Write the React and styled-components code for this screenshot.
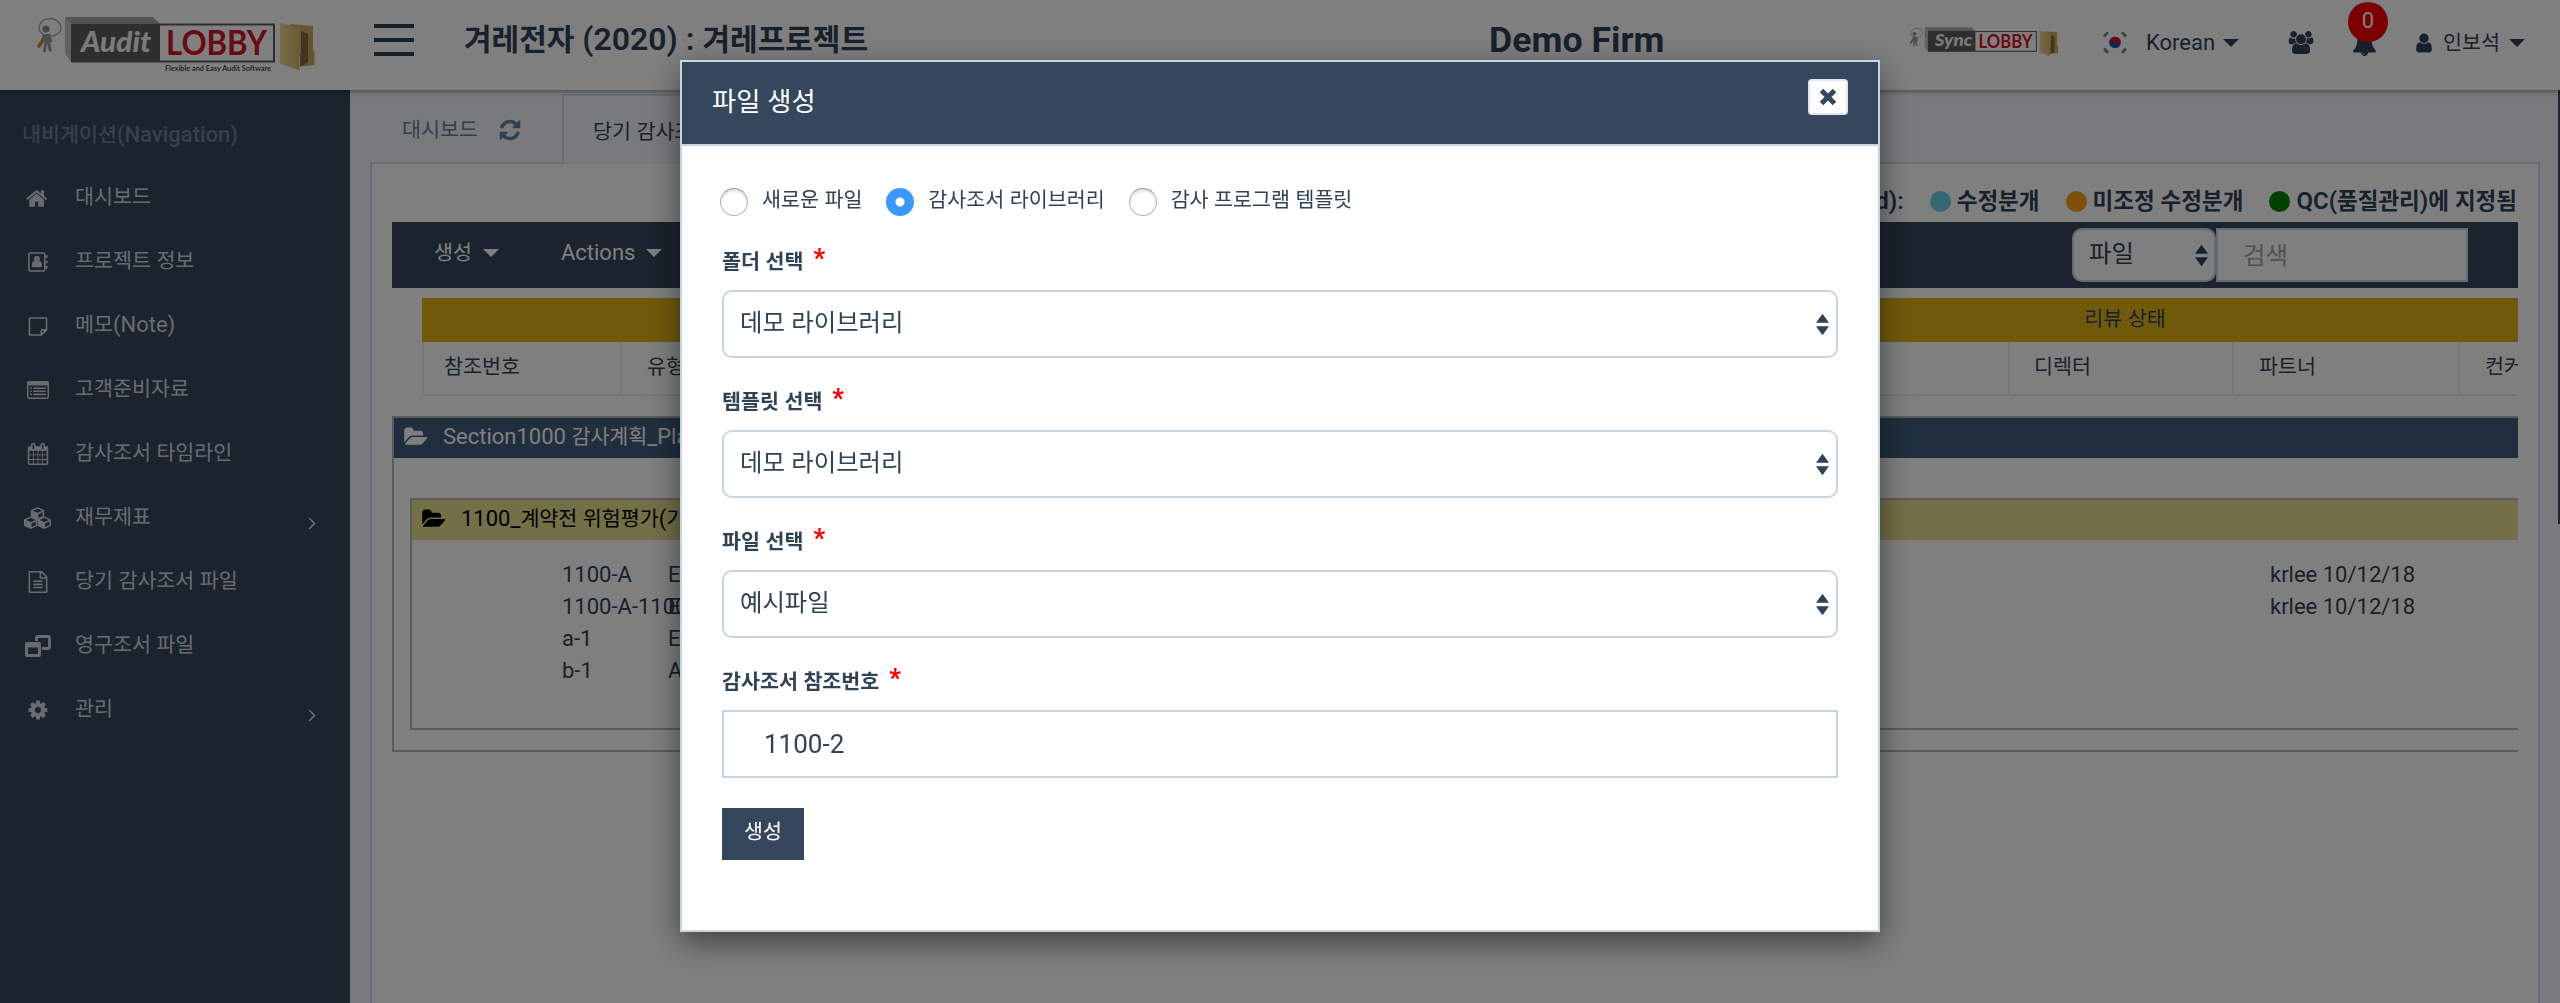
import React from "react";
import styled, { createGlobalStyle, css } from "styled-components";

const c = {
  navy: "#34475c",
  ink: "#2f4256",
  line: "#c8d6e4",
  body: "#f3f5f9",
};

const Global = createGlobalStyle`
  *, *::before, *::after { box-sizing: border-box; }
  html, body { margin: 0; height: 1003px; overflow: hidden; }
  body {
    font-family: Roboto, "Noto Sans CJK KR", sans-serif;
    font-size: 22px;
    line-height: 32px;
    color: ${c.ink};
    background: ${c.body};
  }
`;

const Line = styled.span`white-space: nowrap;`;
const Hangul = styled.span`font-size: 0.938em; line-height: 0;`;

/* Sets Hangul runs slightly smaller than the Latin text around them. */
function T({ children }) {
  const parts = String(children).split(/([\uac00-\ud7a3]+)/);
  return (
    <Line>
      {parts.map((p, i) => (i % 2 ? <Hangul key={i}>{p}</Hangul> : p))}
    </Line>
  );
}

/* ---------- icons ---------- */
const Svg = styled.svg`
  display: block;
  flex: none;
  fill: currentColor;
  overflow: visible;
`;

const paths = {
  home: "M1408 992v480q0 26-19 45t-45 19h-384v-384h-256v384h-384q-26 0-45-19t-19-45v-480q0-1 .5-3t.5-3l575-474 575 474q1 2 1 6zm223-69l-62 74q-8 9-21 11h-3q-13 0-21-7l-692-577-692 577q-12 8-24 7-13-2-21-11l-62-74q-8-10-7-23.5t11-21.5l719-599q32-26 76-26t76 26l244 204v-195q0-14 9-23t23-9h192q14 0 23 9t9 23v408l219 182q10 8 11 21.5t-7 23.5z",
  file: "M1596 380q28 28 48 76t20 88v1152q0 40-28 68t-68 28h-1344q-40 0-68-28t-28-68v-1600q0-40 28-68t68-28h896q40 0 88 20t76 48zm-444-244v376h376q-10-29-22-41l-313-313q-12-12-41-22zm384 1528v-1024h-416q-40 0-68-28t-28-68v-416h-768v1536h1280zm-1024-864q0-14 9-23t23-9h704q14 0 23 9t9 23v64q0 14-9 23t-23 9h-704q-14 0-23-9t-9-23v-64zm736 224q14 0 23 9t9 23v64q0 14-9 23t-23 9h-704q-14 0-23-9t-9-23v-64q0-14 9-23t23-9h704zm0 256q14 0 23 9t9 23v64q0 14-9 23t-23 9h-704q-14 0-23-9t-9-23v-64q0-14 9-23t23-9h704z",
  calendar: "M192 1664h288v-288h-288v288zm352 0h320v-288h-320v288zm-352-352h288v-320h-288v320zm352 0h320v-320h-320v320zm-352-384h288v-288h-288v288zm736 736h320v-288h-320v288zm-384-736h320v-288h-320v288zm768 736h288v-288h-288v288zm-384-352h320v-320h-320v320zm-352-864v-288q0-13-9.5-22.5t-22.5-9.5h-64q-13 0-22.5 9.5t-9.5 22.5v288q0 13 9.5 22.5t22.5 9.5h64q13 0 22.5-9.5t9.5-22.5zm736 864h288v-320h-288v320zm-384-384h320v-288h-320v288zm384 0h288v-288h-288v288zm32-480v-288q0-13-9.5-22.5t-22.5-9.5h-64q-13 0-22.5 9.5t-9.5 22.5v288q0 13 9.5 22.5t22.5 9.5h64q13 0 22.5-9.5t9.5-22.5zm384-64v1280q0 52-38 90t-90 38h-1408q-52 0-90-38t-38-90v-1280q0-52 38-90t90-38h128v-96q0-66 47-113t113-47h64q66 0 113 47t47 113v96h384v-96q0-66 47-113t113-47h64q66 0 113 47t47 113v96h128q52 0 90 38t38 90z",
  cog: "M1152 896q0-106-75-181t-181-75-181 75-75 181 75 181 181 75 181-75 75-181zm512-109v222q0 12-8 23t-20 13l-185 28q-19 54-39 91 35 50 107 138 10 12 10 25t-9 23q-27 37-99 108t-94 71q-12 0-26-9l-138-108q-44 23-91 38-16 136-29 186-7 28-36 28h-222q-14 0-24.5-8.5t-11.5-21.5l-28-184q-49-16-90-37l-141 107q-10 9-25 9-14 0-25-11-126-114-165-168-7-10-7-23 0-12 8-23 15-21 51-66.5t54-70.5q-27-50-41-99l-183-27q-13-2-21-12.5t-8-23.5v-222q0-12 8-23t19-13l186-28q14-46 39-92-40-57-107-138-10-12-10-24 0-10 9-23 26-36 98.5-107.5t94.5-71.5q13 0 26 10l138 107q44-23 91-38 16-136 29-186 7-28 36-28h222q14 0 24.5 8.5t11.5 21.5l28 184q49 16 90 37l142-107q9-9 24-9 13 0 25 10 129 119 165 170 7 8 7 22 0 12-8 23-15 21-51 66.5t-54 70.5q26 50 41 98l183 28q13 2 21 12.5t8 23.5z",
  refresh: "M1639 1056q0 5-1 7-64 268-268 434.5t-478 166.5q-146 0-282.5-55t-243.5-157l-129 129q-19 19-45 19t-45-19-19-45v-448q0-26 19-45t45-19h448q26 0 45 19t19 45-19 45l-137 137q71 66 161 102t187 36q134 0 250-65t186-179q11-17 53-117 8-23 30-23h192q13 0 22.5 9.5t9.5 22.5zm25-800v448q0 26-19 45t-45 19h-448q-26 0-45-19t-19-45 19-45l138-138q-148-137-349-137-134 0-250 65t-186 179q-11 17-53 117-8 23-30 23h-199q-13 0-22.5-9.5t-9.5-22.5v-7q65-268 270-434.5t480-166.5q146 0 284 55.5t245 156.5l130-129q19-19 45-19t45 19 19 45z",
  folder: "M1879 952q0 31-31 66l-336 396q-43 51-120.5 86.5t-143.5 35.5h-1088q-34 0-60.5-13t-26.5-43q0-31 31-66l336-396q43-51 120.5-86.5t143.5-35.5h1088q34 0 60.5 13t26.5 43zm-343-344v160h-832q-94 0-197 47.5t-164 119.5l-337 396-5 6q0-4-.5-12.5t-.5-12.5v-960q0-92 66-158t158-66h320q92 0 158 66t66 158v32h544q92 0 158 66t66 158z",
  bell: "M912 1696q0-16-16-16-59 0-101.5-42.5t-42.5-101.5q0-16-16-16t-16 16q0 73 51.5 124.5t124.5 51.5q16 0 16-16zm816-288q0 52-38 90t-90 38h-448q0 106-75 181t-181 75-181-75-75-181h-448q-52 0-90-38t-38-90q50-42 91-88t85-119.5 74.5-158.5 50-206 19.5-260q0-152 117-282.5t307-158.5q-8-19-8-39 0-40 28-68t68-28 68 28 28 68q0 20-8 39 190 28 307 158.5t117 282.5q0 139 19.5 260t50 206 74.5 158.5 85 119.5 91 88z",
  user: "M1536 1399q0 109-62.5 187t-150.5 78h-854q-88 0-150.5-78t-62.5-187q0-85 8.5-160.5t31.5-152 58.5-131 94-89 134.5-34.5q131 128 313 128t313-128q76 0 134.5 34.5t94 89 58.5 131 31.5 152 8.5 160.5zm-256-887q0 159-112.5 271.5t-271.5 112.5-271.5-112.5-112.5-271.5 112.5-271.5 271.5-112.5 271.5 112.5 112.5 271.5z",
  users: "M657 896q-162 5-265 128h-134q-82 0-138-40.5t-56-118.5q0-353 124-353 6 0 43.5 21t97.5 42.5 119 21.5q67 0 133-23-5 37-5 66 0 155 90 289zm1071 637q0 120-73 189.5t-194 69.5h-874q-121 0-194-69.5t-73-189.5q0-53 3.5-103.5t14-109 26.5-108.5 43-97.5 62-81 85.5-53.5 111.5-20q10 0 43 21.5t73 48 107 48 135 21.5 135-21.5 107-48 73-48 43-21.5q61 0 111.5 20t85.5 53.5 62 81 43 97.5 26.5 108.5 14 109 3.5 103.5zm-1024-1277q0 106-75 181t-181 75-181-75-75-181 75-181 181-75 181 75 75 181zm704 384q0 159-112.5 271.5t-271.5 112.5-271.5-112.5-112.5-271.5 112.5-271.5 271.5-112.5 271.5 112.5 112.5 271.5zm576 225q0 78-56 118.5t-138 40.5h-134q-103-123-265-128 90-134 90-289 0-29-5-66 66 23 133 23 59 0 119-21.5t97.5-42.5 43.5-21q124 0 124 353zm-128-609q0 106-75 181t-181 75-181-75-75-181 75-181 181-75 181 75 75 181z",
};

const Fa = ({ name, w = 22, h = 22, box = "0 0 1792 1792" }) => (
  <Svg width={w} height={h} viewBox={box}><path d={paths[name]} /></Svg>
);

const AddressBook = () => (
  <Svg width="22" height="20" viewBox="0 0 22 22">
    <rect x="1" y="1" width="17.5" height="20" rx="1.8" fill="none" stroke="currentColor" strokeWidth="1.7" />
    <circle cx="9.8" cy="7.8" r="3.3" />
    <path d="M4.2 15.2q0-5 3-5.2 2.600 2 5.200 0 3 .2 3 5.200 0 1.600-1.500 1.600h-8.200q-1.500 0-1.500-1.600z" />
    <path d="M19 3.500h2.500v3h-2.500zM19 9.500h2.500v3h-2.500zM19 15.500h2.500v3h-2.500z" />
  </Svg>
);
const StickyNote = () => (
  <Svg width="20" height="19" viewBox="0 0 20 20">
    <path d="M2 1h16q1 0 1 1v11.500l-5.500 5.500h-11.500q-1 0-1-1v-16q0-1 1-1z M19 13.500h-4.500q-1 0-1 1v4.500" fill="none" stroke="currentColor" strokeWidth="1.700" />
  </Svg>
);
const ListAlt = () => (
  <Svg width="22" height="18" viewBox="0 0 22 18">
    <path d="M2 0h18q2 0 2 2v14q0 2-2 2h-18q-2 0-2-2v-14q0-2 2-2zM1.500 4.500v11.500q0 .6.6.6h17.800q.6 0 .6-.6v-11.500z" fillRule="evenodd" />
    <path d="M3.200 6.400h1.700v1.600h-1.700zM3.200 9.500h1.700v1.600h-1.700zM3.200 12.600h1.700v1.600h-1.700zM6.300 6.400h12.500v1.600h-12.500zM6.300 9.500h12.500v1.600h-12.500zM6.300 12.600h12.500v1.600h-12.500z" />
  </Svg>
);
const Cube = ({ x, y }) => (
  <g transform={`translate(${x} ${y})`}>
    <path d="M6.700 .2l6 2.500q.7.300.7 1v5.300q0 .7-.7 1l-6 2.700-6-2.700q-.7-.3-.7-1v-5.300q0-.7.700-1zM6.700 1.700l-4.800 2 4.800 2 4.800-2zM7.500 7.200v3.700l4.300-1.900v-3.700z" fillRule="evenodd" />
  </g>
);
const Cubes = () => (
  <Svg width="27" height="22" viewBox="0 0 27 22">
    <Cube x={6.800} y={0} /><Cube x={0} y={9.200} /><Cube x={13.600} y={9.200} />
  </Svg>
);
const Restore = () => (
  <Svg width="26" height="22" viewBox="0 0 26 22">
    <path d="M11.500 6v-3q0-1.500 1.500-1.500h10q1.500 0 1.500 1.500v9q0 1.500-1.500 1.500h-6" fill="none" stroke="currentColor" strokeWidth="2.800" />
    <path d="M2 7h12q2 0 2 2v11q0 2-2 2h-12q-2 0-2-2v-11q0-2 2-2zM3 12.500v6.500h10v-6.500z" fillRule="evenodd" />
  </Svg>
);
const Chevron = () => (
  <Svg width="8" height="13" viewBox="0 0 8 13">
    <path d="M1 1l5.500 5.500-5.500 5.500" fill="none" stroke="currentColor" strokeWidth="1.700" />
  </Svg>
);
const Taegeuk = () => (
  <Svg width="26" height="24" viewBox="0 0 26 24">
    <g fill="#4a5563">
      <path d="M1 4.500l4-4 2 1.500-4 4.500zM25 4.500l-4-4-2 1.500 4 4.500zM1 18.500l4 4.500 2-2-4-4.500zM25 18.500l-4 4.500-2-2 4-4.500z" opacity=".75" />
    </g>
    <circle cx="13" cy="11.500" r="5.800" fill="#1550b0" />
    <path d="M7.200 11.500a5.800 5.800 0 0 1 11.600 0q-1 2.500-3.200 2-1.600-.4-2.600-2-1.300-1.800-3.300-1.500-1.600.2-2.500 1.500z" fill="#d8102c" />
  </Svg>
);

const Caret = styled.i`
  flex: none;
  width: 0;
  height: 0;
  border: 8px solid transparent;
  border-top-color: currentColor;
  border-bottom: 0;
`;

const Updown = () => (
  <Svg width="13" height="23" viewBox="0 0 14 23"><path d="M0 9.500l7-9.500 7 9.500zM0 13.500h14l-7 9.500z" /></Svg>
);

/* ---------- logo ---------- */
const LogoSvg = styled(Svg)`
  text { font-family: Lato, "Open Sans", sans-serif; }
`;
const Logo = ({ word, width, height, tagline, size = 28, x = 81 }) => (
  <LogoSvg width={width} height={height} viewBox="36 16 282 58">
    <defs>
      <linearGradient id={`f${word}`} x1="0" x2="1">
        <stop offset="0" stopColor="#ecd490" /><stop offset="1" stopColor="#d2b468" />
      </linearGradient>
    </defs>
    <ellipse cx="50" cy="27.500" rx="11" ry="9" fill="none" stroke="#a2a2a2" strokeWidth="1.300" />
    <circle cx="46" cy="29" r="3.600" fill="#8f8f8f" />
    <path d="M43 34h7l2.500 8-2.500.5 2 8.500-3 .5-2-8-1.500 9-2.500-.5 1.500-11-4 1z" fill="#999" />
    <path d="M43 40l-4 6" stroke="#c88a35" strokeWidth="3.500" strokeLinecap="round" />
    <path d="M65 17h88l7 6.500h-89z" fill="#a9a9a9" />
    <path d="M65 17l6 6.500v38.500l-6-9z" fill="#c0c0c0" />
    <rect x="71" y="23.500" width="204" height="39" fill="#5d5d5f" />
    <rect x="160" y="25.500" width="113" height="35" fill="#fff" />
    <text x={x} y="52" fontSize={size} fontWeight="900" fontStyle="italic" fill="#f4f4f4" textLength={tagline ? 70 : 70} lengthAdjust="spacingAndGlyphs">{word}</text>
    <text x="166" y="54.800" fontSize="34" fontWeight="700" fill="#cf1426" textLength="101" lengthAdjust="spacingAndGlyphs">LOBBY</text>
    {tagline && <text x="165" y="71" fontSize="8" fontWeight="600" fill="#333" textLength="106" lengthAdjust="spacingAndGlyphs">{tagline}</text>}
    <path d="M290 24l23 2v24l1.500 1v14l-12 1.500z" fill="#c8a960" />
    <path d="M301 31l7 3v28l-8 5z" fill="#826d38" />
    <path d="M280 23l18 4q3 1 3 5v21l-1.500 1v16.500l-19.500-7z" fill={`url(#f${word})`} />
  </LogoSvg>
);

/* ---------- header ---------- */
const Header = styled.header`
  position: relative;
  z-index: 1;
  height: 90px;
  background: #fff;
  box-shadow: 0 1px 6px rgba(0, 0, 0, 0.45);
  display: flex;
  align-items: flex-start;
`;
const Slot = styled.div`
  flex: none;
  width: ${(p) => p.$w}px;
  padding-top: ${(p) => p.$top || 0}px;
  padding-left: ${(p) => p.$left || 0}px;
`;
const Burger = styled.div`
  width: 40px;
  display: grid;
  gap: 10px;
  i { height: 4px; background: ${c.ink}; }
`;
const Heading = styled.h1`
  margin: 0;
  font-size: 32px;
  line-height: 40px;
  font-weight: 600;
`;
const Firm = styled(Heading)`
  font-size: 35.700px;
  font-weight: 700;
`;
const Account = styled.div`
  display: flex;
  align-items: center;
  gap: ${(p) => p.$gap}px;
  height: 32px;
`;
const BellBox = styled.div`
  position: relative;
  width: 26px;
`;
const Badge = styled.span`
  position: absolute;
  left: -4px;
  top: -29px;
  width: 40px;
  height: 40px;
  border-radius: 50%;
  background: #f90000;
  color: #fff;
  line-height: 37px;
  text-align: center;
`;

/* ---------- shell ---------- */
const Shell = styled.div`
  display: flex;
  height: 913px;
  overflow: hidden;
`;
const Side = styled.nav`
  flex: none;
  width: 350px;
  background: ${c.navy};
  color: #d3d9df;
`;
const SideTitle = styled.div`
  height: 75px;
  padding: 29px 0 0 22px;
  font-weight: 500;
  color: #6c829a;
`;
const SideItem = styled.a`
  display: grid;
  grid-template-columns: 75px 1fr 42px;
  align-items: center;
  height: 64px;
  > :first-child { justify-self: center; margin-top: 2px; }
  > :nth-child(3) { margin-top: 12px; }
`;
const Main = styled.main`
  flex: 1;
  min-width: 0;
  display: flex;
  flex-direction: column;
  padding: 4px 18px 0 20px;
  background: ${c.body};
`;
const ScrollThumb = styled.div`
  flex: none;
  width: 2px;
  height: 434px;
  background: ${c.navy};
`;
const Tabs = styled.div`
  flex: none;
  display: flex;
  height: 68px;
  position: relative;
  z-index: 1;
`;
const Tab = styled.div`
  display: flex;
  align-items: center;
  gap: 20px;
  height: ${(p) => (p.$on ? 70 : 68)}px;
  width: ${(p) => p.$w}px;
  padding: 3px 0 0 32px;
  color: #5d7f9f;
  ${(p) => p.$on && css`
    color: ${c.ink};
    background: ${c.body};
    border: 2px solid ${c.line};
    border-bottom: 0;
    padding-left: 29px;
  `}
`;
const Panel = styled.section`
  flex: 1;
  min-height: 0;
  border: 2px solid ${c.line};
  border-bottom: 0;
  border-top-color: #d8dde2;
  background: #fff;
  padding: 17px 20px 0 20px;
`;
const Clip = styled.div`
  overflow: hidden;
  width: 2126px;
`;
const Legend = styled.div`
  display: flex;
  justify-content: flex-end;
  height: 41px;
  padding-right: 1px;
  font-size: 24px;
  line-height: 40px;
  font-weight: 600;
  white-space: nowrap;
`;
const Key = styled.span`
  display: flex;
  height: 40px;
  align-items: center;
  margin-left: ${(p) => p.$ml}px;
  &::before {
    content: "";
    flex: none;
    width: 21px;
    height: 21px;
    margin: 0 6px 0 0;
    border-radius: 50%;
    background: ${(p) => p.$color};
  }
`;
const Toolbar = styled.div`
  display: flex;
  height: 66px;
  padding: 6px 50px 0 42px;
  background: ${c.navy};
  color: #fff;
`;
const MenuButton = styled.div`
  display: flex;
  align-items: center;
  gap: 11px;
  height: 49px;
  margin-right: 62px;
`;
const field = css`
  display: flex;
  align-items: center;
  border: 2px solid ${c.line};
  background: #fff;
  color: ${c.ink};
  font-size: 26px;
`;
const SelectBox = styled.div`
  ${field}
  justify-content: space-between;
  height: ${(p) => p.$h}px;
  width: ${(p) => p.$w};
  padding: ${(p) => p.$pad};
  border-radius: 10px;
  > :first-child { margin-top: -4px; }
`;
const TextBox = styled.div`
  ${field}
  height: ${(p) => p.$h}px;
  width: ${(p) => p.$w};
  padding: ${(p) => p.$pad};
  color: ${(p) => (p.$ghost ? "#a3a3a3" : c.ink)};
`;
const Spacer = styled.div`flex: 1;`;

const HeadTable = styled.div`
  width: 2270px;
  margin: 10px 0 0 30px;
`;
const GoldRow = styled.div`
  display: flex;
  height: 44px;
  background: #e1b512;
  line-height: 42px;
  > :first-child { width: 1136px; }
  > :last-child { flex: 1; text-align: center; }
`;
const ColRow = styled.div`
  display: grid;
  grid-template-columns: 198px 350px 389px 225px 424px 224px 226px 1fr;
  height: 54px;
  border-bottom: 2px solid #ececec;
`;
const Col = styled.div`
  border-left: 2px solid #ececec;
  padding: 9px 0 0 ${(p) => p.$pl || 24}px;
`;
const Folder = styled.div`
  width: 2300px;
  height: ${(p) => p.$h}px;
  margin: ${(p) => p.$m};
  border: 2px solid #b7b7b7;
`;
const FolderHead = styled.div`
  display: flex;
  align-items: center;
  gap: 15px;
  height: 40px;
  padding: 0 0 2px 10px;
  background: ${(p) => p.$bg};
  color: ${(p) => p.$fg};
`;
const Files = styled.div`padding: 19px 0 0 150px;`;
const FileRow = styled.div`
  display: grid;
  grid-template-columns: 106px 1602px 200px;
  height: 32px;
  > * { white-space: nowrap; }
`;

/* ---------- modal ---------- */
const Backdrop = styled.div`
  position: fixed;
  inset: 0;
  z-index: 10;
  padding-top: 60px;
  background: rgba(0, 0, 0, 0.5);
`;
const Dialog = styled.div`
  width: 1200px;
  height: 872px;
  margin: 0 auto;
  border: 2px solid ${c.line};
  background: #fff;
  box-shadow: 0 10px 30px rgba(0, 0, 0, 0.5);
`;
const DialogHead = styled.div`
  display: flex;
  justify-content: space-between;
  height: 84px;
  padding: 17px 30px 0 30px;
  background: ${c.navy};
  border-bottom: 2px solid ${c.line};
  color: #fff;
  font-size: 28px;
  line-height: 46px;
`;
const Close = styled.button`
  display: grid;
  place-items: center;
  width: 40px;
  height: 36px;
  padding: 0;
  border: 2px solid #dfe6ed;
  border-radius: 4px;
  background: #fff;
  color: ${c.navy};
`;
const Form = styled.div`padding: 36px 40px 0 40px;`;
const Radios = styled.div`
  display: flex;
  height: 44px;
  margin-left: -2px;
`;
const Radio = styled.label`
  display: flex;
  align-items: flex-start;
  gap: 14px;
  margin-right: 24px;
  line-height: 36px;
  &::before {
    content: "";
    width: 28px;
    height: 28px;
    margin-top: 6px;
    border-radius: 50%;
    ${(p) => p.$on
      ? css`background: radial-gradient(circle, #fff 0 4px, #3b99fc 5px);`
      : css`
        border: 1px solid #b4b4b4;
        border-top-color: #999;
        background: #fff;
        box-shadow: inset 0 2px 3px rgba(0, 0, 0, 0.15);
      `}
  }
`;
const Label = styled.div`
  display: flex;
  gap: 10px;
  height: ${(p) => p.$h || 72}px;
  padding-top: ${(p) => p.$pt || 27}px;
  font-weight: 600;
`;
const Star = styled.b`
  color: #f00;
  font-size: 25px;
  line-height: 26px;
`;
const Submit = styled.button`
  display: block;
  width: 82px;
  height: 52px;
  margin-top: 30px;
  padding: 0 0 4px;
  border: 0;
  background: ${c.navy};
  color: #fff;
  font: inherit;
`;

const nav = [
  ["대시보드", <Fa name="home" w={23} h={23} />],
  ["프로젝트 정보", <AddressBook />],
  ["메모(Note)", <StickyNote />],
  ["고객준비자료", <ListAlt />],
  ["감사조서 타임라인", <Fa name="calendar" w={22} h={22} />],
  ["재무제표", <Cubes />, true],
  ["당기 감사조서 파일", <Fa name="file" w={22} h={22} />],
  ["영구조서 파일", <Restore />],
  ["관리", <Fa name="cog" w={22} h={22} />, true],
];
const files = [
  ["1100-A", "Excel", "krlee 10/12/18"],
  ["1100-A-1100", "Excel", "krlee 10/12/18"],
  ["a-1", "Excel", ""],
  ["b-1", "Audit", ""],
];
const columns = [["참조번호", 20], ["유형", 25], [""], [""], [""], ["디렉터", 24], ["파트너", 25], ["컨커런스", 25]];

const Select = ({ label, first, value }) => (
  <>
    <Label $h={first ? 64 : 72} $pt={first ? 20 : 28}><T>{label}</T><Star>*</Star></Label>
    <SelectBox $h={68} $w="1116px" $pad="0 7px 0 16px"><T>{value}</T><Updown /></SelectBox>
  </>
);

export default function App() {
  return (
    <>
      <Global />
      <Header>
        <Slot $w={374} $top={16} $left={36}>
          <Logo word="Audit" width={282} height={58} tagline="Flexible and Easy Audit Software" />
        </Slot>
        <Slot $w={90} $top={24}><Burger><i /><i /><i /></Burger></Slot>
        <Slot $w={1025} $top={19}><Heading><T>겨레전자 (2020) : 겨레프로젝트</T></Heading></Slot>
        <Slot $w={420} $top={20}><Firm>Demo Firm</Firm></Slot>
        <Slot $w={193} $top={27}><Logo word="Sync" width={151} height={31} size={30} x={84} /></Slot>
        <Slot $w={186} $top={27}>
          <Account $gap={8}>
            <Taegeuk /><Slot $w={2} /><T>Korean</T><Caret />
          </Account>
        </Slot>
        <Slot $w={64} $top={31}><Fa name="users" w={26} h={23} box="64 0 1920 1792" /></Slot>
        <Slot $w={62} $top={31}><BellBox><Fa name="bell" w={25} h={25} /><Badge>0</Badge></BellBox></Slot>
        <Slot $w={140} $top={27}>
          <Account $gap={9}>
            <Fa name="user" w={20} h={22} box="128 0 1536 1792" /><T>인보석</T><Caret />
          </Account>
        </Slot>
      </Header>
      <Shell>
        <Side>
          <SideTitle><T>내비게이션(Navigation)</T></SideTitle>
          {nav.map(([text, icon, more]) => (
            <SideItem key={text}>{icon}<T>{text}</T>{more && <Chevron />}</SideItem>
          ))}
        </Side>
        <Main>
          <Tabs>
            <Tab $w={192}><T>대시보드</T><Fa name="refresh" w={24} h={24} /></Tab>
            <Tab $w={300} $on><T>당기 감사조서 파일</T></Tab>
          </Tabs>
          <Panel>
            <Clip>
              <Legend>
                <T>(Assigned):</T>
                <Key $ml={26} $color="#6bcfe9"><T>수정분개</T></Key>
                <Key $ml={26} $color="#fba31a"><T>미조정 수정분개</T></Key>
                <Key $ml={26} $color="#008000"><T>QC(품질관리)에 지정됨</T></Key>
              </Legend>
              <Toolbar>
                <MenuButton><T>생성</T><Caret /></MenuButton>
                <MenuButton><T>Actions</T><Caret /></MenuButton>
                <Spacer />
                <SelectBox $h={54} $w="144px" $pad="0 6px 0 15px"><T>파일</T><Updown /></SelectBox>
                <TextBox $h={54} $w="252px" $pad="0 0 0 25px" $ghost><T>검색</T></TextBox>
              </Toolbar>
              <HeadTable>
                <GoldRow><span /><T>리뷰 상태</T></GoldRow>
                <ColRow>
                  {columns.map(([t, pl], i) => <Col key={i} $pl={pl}><T>{t}</T></Col>)}
                </ColRow>
              </HeadTable>
              <Folder $h={336} $m="20px 0 0 0">
                <FolderHead $bg="#405d7c" $fg="#fff">
                  <Fa name="folder" w={24} h={22} box="0 0 1920 1792" /><T>Section1000 감사계획_Planning</T>
                </FolderHead>
                <Folder $h={232} $m="40px 0 0 16px">
                  <FolderHead $bg="#e6de8e" $fg="#000">
                    <Fa name="folder" w={24} h={22} box="0 0 1920 1792" /><T>1100_계약전 위험평가(기본)</T>
                  </FolderHead>
                  <Files>
                    {files.map(([a, b, d]) => (
                      <FileRow key={a}><span>{a}</span><span>{b}</span><span>{d}</span></FileRow>
                    ))}
                  </Files>
                </Folder>
              </Folder>
            </Clip>
          </Panel>
        </Main>
        <ScrollThumb />
      </Shell>

      <Backdrop>
        <Dialog>
          <DialogHead>
            <T>파일 생성</T>
            <Close>
              <Svg width="18" height="18" viewBox="0 0 18 18">
                <path d="M2.500 2.500l13 13M15.500 2.500l-13 13" stroke="currentColor" strokeWidth="5" />
              </Svg>
            </Close>
          </DialogHead>
          <Form>
            <Radios>
              <Radio><T>새로운 파일</T></Radio>
              <Radio $on><T>감사조서 라이브러리</T></Radio>
              <Radio><T>감사 프로그램 템플릿</T></Radio>
            </Radios>
            <Select first label="폴더 선택" value="데모 라이브러리" />
            <Select label="템플릿 선택" value="데모 라이브러리" />
            <Select label="파일 선택" value="예시파일" />
            <Label $pt={28}><T>감사조서 참조번호</T><Star>*</Star></Label>
            <TextBox $h={68} $w="1116px" $pad="0 0 0 40px"><T>1100-2</T></TextBox>
            <Submit><T>생성</T></Submit>
          </Form>
        </Dialog>
      </Backdrop>
    </>
  );
}
